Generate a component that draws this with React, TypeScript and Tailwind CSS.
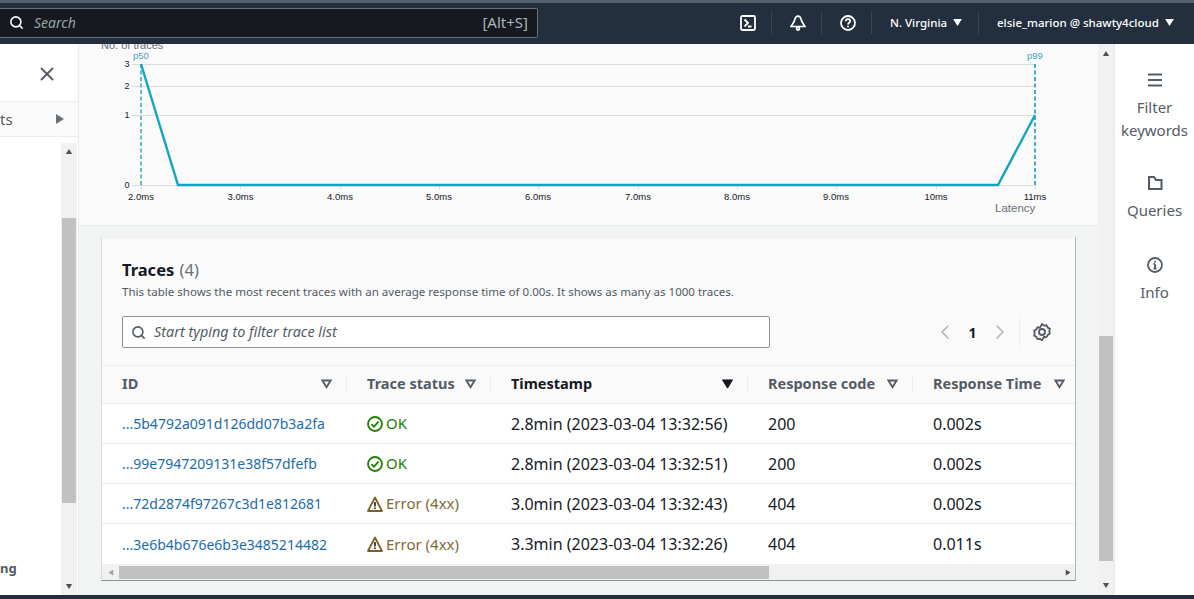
import { ChevronLeft, ChevronRight, Search, X } from 'lucide-react'

const rows = [
  { id: '...5b4792a091d126dd07b3a2fa', ok: true, status: 'OK', time: '2.8min (2023-03-04 13:32:56)', code: '200', resp: '0.002s' },
  { id: '...99e7947209131e38f57dfefb', ok: true, status: 'OK', time: '2.8min (2023-03-04 13:32:51)', code: '200', resp: '0.002s' },
  { id: '...72d2874f97267c3d1e812681', ok: false, status: 'Error (4xx)', time: '3.0min (2023-03-04 13:32:43)', code: '404', resp: '0.002s' },
  { id: '...3e6b4b676e6b3e3485214482', ok: false, status: 'Error (4xx)', time: '3.3min (2023-03-04 13:32:26)', code: '404', resp: '0.011s' },
]

const xTicks = [
  [141, '2.0ms'],
  [240.5, '3.0ms'],
  [340, '4.0ms'],
  [439, '5.0ms'],
  [538, '6.0ms'],
  [638, '7.0ms'],
  [737, '8.0ms'],
  [836, '9.0ms'],
  [936, '10ms'],
  [1035, '11ms'],
] as const

const yTicks = [
  [64, '3'],
  [86, '2'],
  [115, '1'],
  [185, '0'],
] as const

const columns = 'grid grid-cols-[245px_144px_257px_165px_162px]'

function Caret({ className }: { className: string }) {
  return (
    <svg viewBox="0 0 10 8" className={className}>
      <path d="M0 0h10L5 8z" fill="currentColor" />
    </svg>
  )
}

function SortIcon({ active }: { active?: boolean }) {
  return (
    <svg viewBox="0 0 12 10" className="w-[11px] h-[10px] text-[#545b64]">
      {active ? (
        <path d="M0.5 0.5h11L6 9.5z" fill="#16191f" stroke="#16191f" />
      ) : (
        <path d="M1.5 1.2h9L6 8.5z" fill="none" stroke="currentColor" strokeWidth="2" />
      )}
    </svg>
  )
}

function HeaderCell({ label, active, last }: { label: string; active?: boolean; last?: boolean }) {
  return (
    <div className={`flex items-center justify-between pb-[2px] ${last ? 'pl-[20px] pr-[10px]' : 'pl-[20px] pr-[14px]'}`}>
      <span className={`text-[14.5px] font-bold whitespace-nowrap ${active ? 'text-[#16191f]' : 'text-[#545b64]'}`}>{label}</span>
      <span className="flex items-center gap-[14px]">
        <SortIcon active={active} />
        {!last && <span className="h-[18px] border-r border-[#eaeded] -mr-[14px]" />}
      </span>
    </div>
  )
}

function StatusIcon({ ok }: { ok: boolean }) {
  if (ok) {
    return (
      <svg viewBox="0 0 16 16" className="w-[16px] h-[16px] shrink-0" fill="none" stroke="#1d8102" strokeWidth="1.8">
        <circle cx="8" cy="8" r="7" />
        <path d="M4.5 8.2l2.5 2.5 4.5-5" />
      </svg>
    )
  }
  return (
    <svg viewBox="0 0 16 16" className="w-[16px] h-[16px] shrink-0">
      <path d="M8 1.5L1 15h14z" fill="#fff" stroke="#7a6220" strokeWidth="1.8" strokeLinejoin="round" />
      <path d="M8 6v4.5M8 11.5v1.6" stroke="#16191f" strokeWidth="1.6" />
    </svg>
  )
}

function Chart() {
  return (
    <svg viewBox="79 44 1018 182" className="w-[1018px] h-[182px] block" style={{ fontFamily: "'Liberation Sans', sans-serif" }}>
      <text x="101" y="49" fontSize="11" fill="#687078">No. of traces</text>
      {yTicks.map(([y, label]) => (
        <g key={label}>
          <line x1="132" x2="1035" y1={y + 0.5} y2={y + 0.5} stroke="#d9dcdc" />
          <text x="127" y={y + 3} fontSize="9" fill="#16191f" textAnchor="middle">{label}</text>
        </g>
      ))}
      {xTicks.map(([x, label]) => (
        <g key={label}>
          <line x1={Math.floor(x) + 0.5} x2={Math.floor(x) + 0.5} y1="185" y2="189" stroke="#d9dcdc" />
          <text x={x} y="200" fontSize="9.5" fill="#16191f" textAnchor="middle">{label}</text>
        </g>
      ))}
      <line x1="141" x2="141" y1="64" y2="185" stroke="#4fb8c9" strokeWidth="1.8" strokeDasharray="4 2.5" />
      <line x1="1035" x2="1035" y1="64" y2="185" stroke="#2ea6c4" strokeWidth="1.8" strokeDasharray="4 2.5" />
      <polyline points="141,64 178,185 998,185 1035,115" fill="none" stroke="#12a5c3" strokeWidth="2.4" />
      <text x="133" y="59" fontSize="9.5" fill="#3fa3c4">p50</text>
      <text x="1027" y="59" fontSize="9.5" fill="#3fa3c4">p99</text>
      <text x="995" y="211.5" fontSize="11.5" fill="#687078">Latency</text>
    </svg>
  )
}

function SideItem({ icon, label, className }: { icon: React.ReactNode; label: React.ReactNode; className?: string }) {
  return (
    <div className={`flex flex-col items-center text-center text-[15px] leading-[23px] text-[#545b64] ${className ?? ''}`}>
      <span className="mb-[8px] h-[16px] flex items-center">{icon}</span>
      {label}
    </div>
  )
}

export default function App() {
  return (
    <div className="h-screen w-full overflow-hidden flex flex-col bg-[#f2f3f3]" style={{ fontFamily: "'Noto Sans', sans-serif" }}>
      {/* Top bar */}
      <header className="h-[44px] shrink-0 bg-[#232f3e] border-t-[3px] border-t-[#545f6b] flex items-center text-white">
        <div className="w-[538px] h-[30px] -mt-[2px] bg-[#16191f] border border-l-0 border-[#687078] rounded-r-[2px] flex items-center pl-[9px] pr-[9px] text-[#95a5a6]">
          <Search className="w-[15px] h-[15px] text-white" strokeWidth={2.5} />
          <span className="ml-[10px] text-[14px] italic">Search</span>
          <span className="ml-auto text-[15px] text-[#aab7b8]">[Alt+S]</span>
        </div>
        <div className="ml-auto flex items-center -mt-[2px]">
          <div className="w-[50px] h-[22px] pl-[2px] flex items-center justify-center border-r border-[#3a4654]">
            <svg viewBox="0 0 16 16" className="w-[16px] h-[16px]" fill="none" stroke="white" strokeWidth="1.8">
              <rect x="1" y="1" width="14" height="14" rx="1.5" />
              <path d="M4.5 4.5L8 8l-3.5 3.5M8 11.5h3.5" />
            </svg>
          </div>
          <div className="w-[50px] h-[22px] pl-[2px] flex items-center justify-center border-r border-[#3a4654]">
            <svg viewBox="0 0 16 16" className="w-[16px] h-[16px]" fill="none" stroke="white" strokeWidth="1.7">
              <path d="M8 1.2C6.4 1.2 5.4 2.4 5 4.2 4.5 6.8 3 8.600 1 11.500h14c-2-2.900-3.500-4.700-4-7.300C10.600 2.400 9.600 1.200 8 1.200z" />
              <circle cx="8" cy="13.600" r="1.500" />
            </svg>
          </div>
          <div className="w-[50px] h-[22px] pl-[2px] flex items-center justify-center border-r border-[#3a4654]">
            <svg viewBox="0 0 16 16" className="w-[16px] h-[16px]" fill="none" stroke="white" strokeWidth="1.8">
              <circle cx="8" cy="8" r="7" />
              <path d="M5.800 6.200c0-1.300 1-2.100 2.200-2.100s2.200.8 2.200 2c0 1.600-2.200 1.700-2.200 3.400" />
              <path d="M8 10.800v1.500" />
            </svg>
          </div>
          <div className="w-[107px] h-[22px] pl-[18px] flex items-center border-r border-[#3a4654] text-[11.5px] font-medium">
            N. Virginia
            <Caret className="w-[9px] h-[7px] ml-[6px]" />
          </div>
          <div className="w-[215px] h-[22px] pl-[18px] flex items-center text-[11.5px] font-medium whitespace-nowrap">
            elsie_marion @ shawty4cloud
            <Caret className="w-[9px] h-[7px] ml-[6px]" />
          </div>
        </div>
      </header>

      <div className="flex-1 min-h-0 flex">
        {/* Left panel */}
        <aside className="w-[79px] shrink-0 bg-white border-r border-[#eaeded] flex flex-col">
          <div className="h-[57px] shrink-0 flex items-center justify-end pr-[20px] pt-[3px]">
            <X className="w-[22px] h-[22px] text-[#545b64]" strokeWidth={2} />
          </div>
          <div className="h-[36px] shrink-0 border-y border-[#eaeded] bg-[#fafafa] flex items-center justify-between pr-[13px] text-[15px] text-[#545b64]">
            <span>ts</span>
            <Caret className="w-[10px] h-[8px] -rotate-90 text-[#687078]" />
          </div>
          <div className="flex-1 min-h-0 flex justify-between pt-[6px]">
            <div className="flex-1 flex items-end pb-[17px]">
              <span className="text-[13px] font-bold text-[#545b64]">ng</span>
            </div>
            <div className="w-[16px] bg-[#f1f1f1] flex flex-col items-center justify-between mr-[1px] py-[6px]">
              <Caret className="w-[8px] h-[5px] rotate-180 text-[#505050]" />
              <div className="w-[14px] h-[285px] bg-[#c1c1c1] mt-[64px] mb-auto" />
              <Caret className="w-[8px] h-[5px] text-[#505050]" />
            </div>
          </div>
        </aside>

        {/* Main column */}
        <main className="flex-1 min-w-0 overflow-hidden">
          <section className="h-[182px] bg-[#fafafa] border-b border-[#eaeded]">
            <Chart />
          </section>
          <section className="mt-[11px] ml-[22px] w-[975px] h-[344px] bg-[#fafafa] border border-t-[#eaeded] border-l-[#d5dbdb] border-r-[#aab7b8] border-b-[#879596] flex flex-col">
            <div className="h-[127px] shrink-0 px-[20px] pt-[19px]">
              <h2 className="text-[16.5px] leading-[26px] font-bold text-[#16191f]">
                Traces <span className="font-normal text-[#687078] ml-[1px]">(4)</span>
              </h2>
              <p className="text-[11.55px] leading-[18px] text-[#545b64] whitespace-nowrap">
                This table shows the most recent traces with an average response time of 0.00s. It shows as many as 1000 traces.
              </p>
              <div className="mt-[15px] flex items-center">
                <div className="w-[648px] h-[32px] bg-white border border-[#879596] rounded-[2px] flex items-center pl-[8px] text-[#545b64]">
                  <Search className="w-[15px] h-[15px]" strokeWidth={2.5} />
                  <span className="ml-[8px] text-[14.4px] italic">Start typing to filter trace list</span>
                </div>
                <div className="ml-auto flex items-center">
                  <ChevronLeft className="w-[24px] h-[24px] text-[#aab7b8]" strokeWidth={1.6} />
                  <span className="w-[31px] text-center text-[14px] font-bold text-[#16191f]">1</span>
                  <ChevronRight className="w-[24px] h-[24px] text-[#aab7b8]" strokeWidth={1.6} />
                  <span className="h-[28px] border-r border-[#eaeded] ml-[7px] mr-[13px]" />
                  <svg viewBox="0 0 18 18" className="w-[18px] h-[18px] mr-[4px]" fill="none" stroke="#545b64" strokeWidth="1.8">
                    <path d="M9 1l2 1.600 2.500-.3 1.200 2.200 2.100 1.300-.5 2.400.5 2.400-2.100 1.300-1.200 2.200-2.500-.3L9 17.400l-2-1.600-2.500.3-1.200-2.200-2.100-1.300.5-2.400-.5-2.400 2.100-1.300 1.200-2.200 2.500.3z" />
                    <circle cx="9" cy="9" r="3" />
                  </svg>
                </div>
              </div>
            </div>

            <div className={`${columns} h-[39px] shrink-0 border-y border-[#eaeded]`}>
              <HeaderCell label="ID" />
              <HeaderCell label="Trace status" />
              <HeaderCell label="Timestamp" active />
              <HeaderCell label="Response code" />
              <HeaderCell label="Response Time" last />
            </div>

            <div className="bg-white flex-1 min-h-0">
              {rows.map((r) => (
                <div key={r.id} className={`${columns} h-[40px] border-b border-[#eaeded] last:border-b-0 items-center text-[16px]`}>
                  <span className="pl-[20px] text-[#1b6ca8] text-[14px]">{r.id}</span>
                  <span className={`pl-[20px] flex items-center gap-[3px] text-[15px] ${r.ok ? 'text-[#1d8102]' : 'text-[#806a34]'}`}>
                    <StatusIcon ok={r.ok} />
                    {r.status}
                  </span>
                  <span className="pl-[20px] text-[#16191f] whitespace-nowrap">{r.time}</span>
                  <span className="pl-[20px] text-[#16191f]">{r.code}</span>
                  <span className="pl-[20px] text-[#16191f]">{r.resp}</span>
                </div>
              ))}
            </div>

            <div className="h-[16px] shrink-0 bg-[#f1f1f1] flex items-center">
              <Caret className="w-[8px] h-[5px] rotate-90 text-[#a3a3a3] ml-[5px]" />
              <div className="ml-[4px] w-[650px] h-[13px] bg-[#c1c1c1]" />
              <Caret className="w-[8px] h-[5px] -rotate-90 text-[#505050] ml-auto mr-[3px]" />
            </div>
          </section>
        </main>

        {/* Page scrollbar */}
        <div className="w-[16px] shrink-0 bg-[#f1f1f1] flex flex-col items-center py-[7px] border-r border-[#eaeded]">
          <Caret className="w-[8px] h-[5px] rotate-180 text-[#505050]" />
          <div className="w-[14px] h-[225px] bg-[#c1c1c1] mt-[280px]" />
          <Caret className="w-[8px] h-[5px] text-[#505050] mt-auto" />
        </div>

        {/* Right panel */}
        <aside className="w-[80px] shrink-0 bg-white border-l border-[#eaeded] flex flex-col items-center pt-[28px] gap-[33px]">
          <SideItem
            icon={
              <svg viewBox="0 0 16 16" className="w-[16px] h-[16px]" stroke="#545b64" strokeWidth="2">
                <path d="M1 2.500h14M1 8h14M1 13.500h14" />
              </svg>
            }
            label={<span>Filter<br />keywords</span>}
          />
          <SideItem
            icon={
              <svg viewBox="0 0 16 16" className="w-[16px] h-[16px]" fill="none" stroke="#545b64" strokeWidth="2">
                <path d="M2 2h5l2 3h5.500v9H2z" />
              </svg>
            }
            label="Queries"
          />
          <SideItem
            className="mt-[2px]"
            icon={
              <svg viewBox="0 0 16 16" className="w-[16px] h-[16px]" fill="none" stroke="#545b64" strokeWidth="1.8">
                <circle cx="8" cy="8" r="7" />
                <path d="M8 7v4.500M6.500 11.500h3M6.500 7H8M8 3.800v1.700" />
              </svg>
            }
            label="Info"
          />
        </aside>
      </div>

      <div className="h-[4px] shrink-0 bg-[#232f3e]" />
    </div>
  )
}
